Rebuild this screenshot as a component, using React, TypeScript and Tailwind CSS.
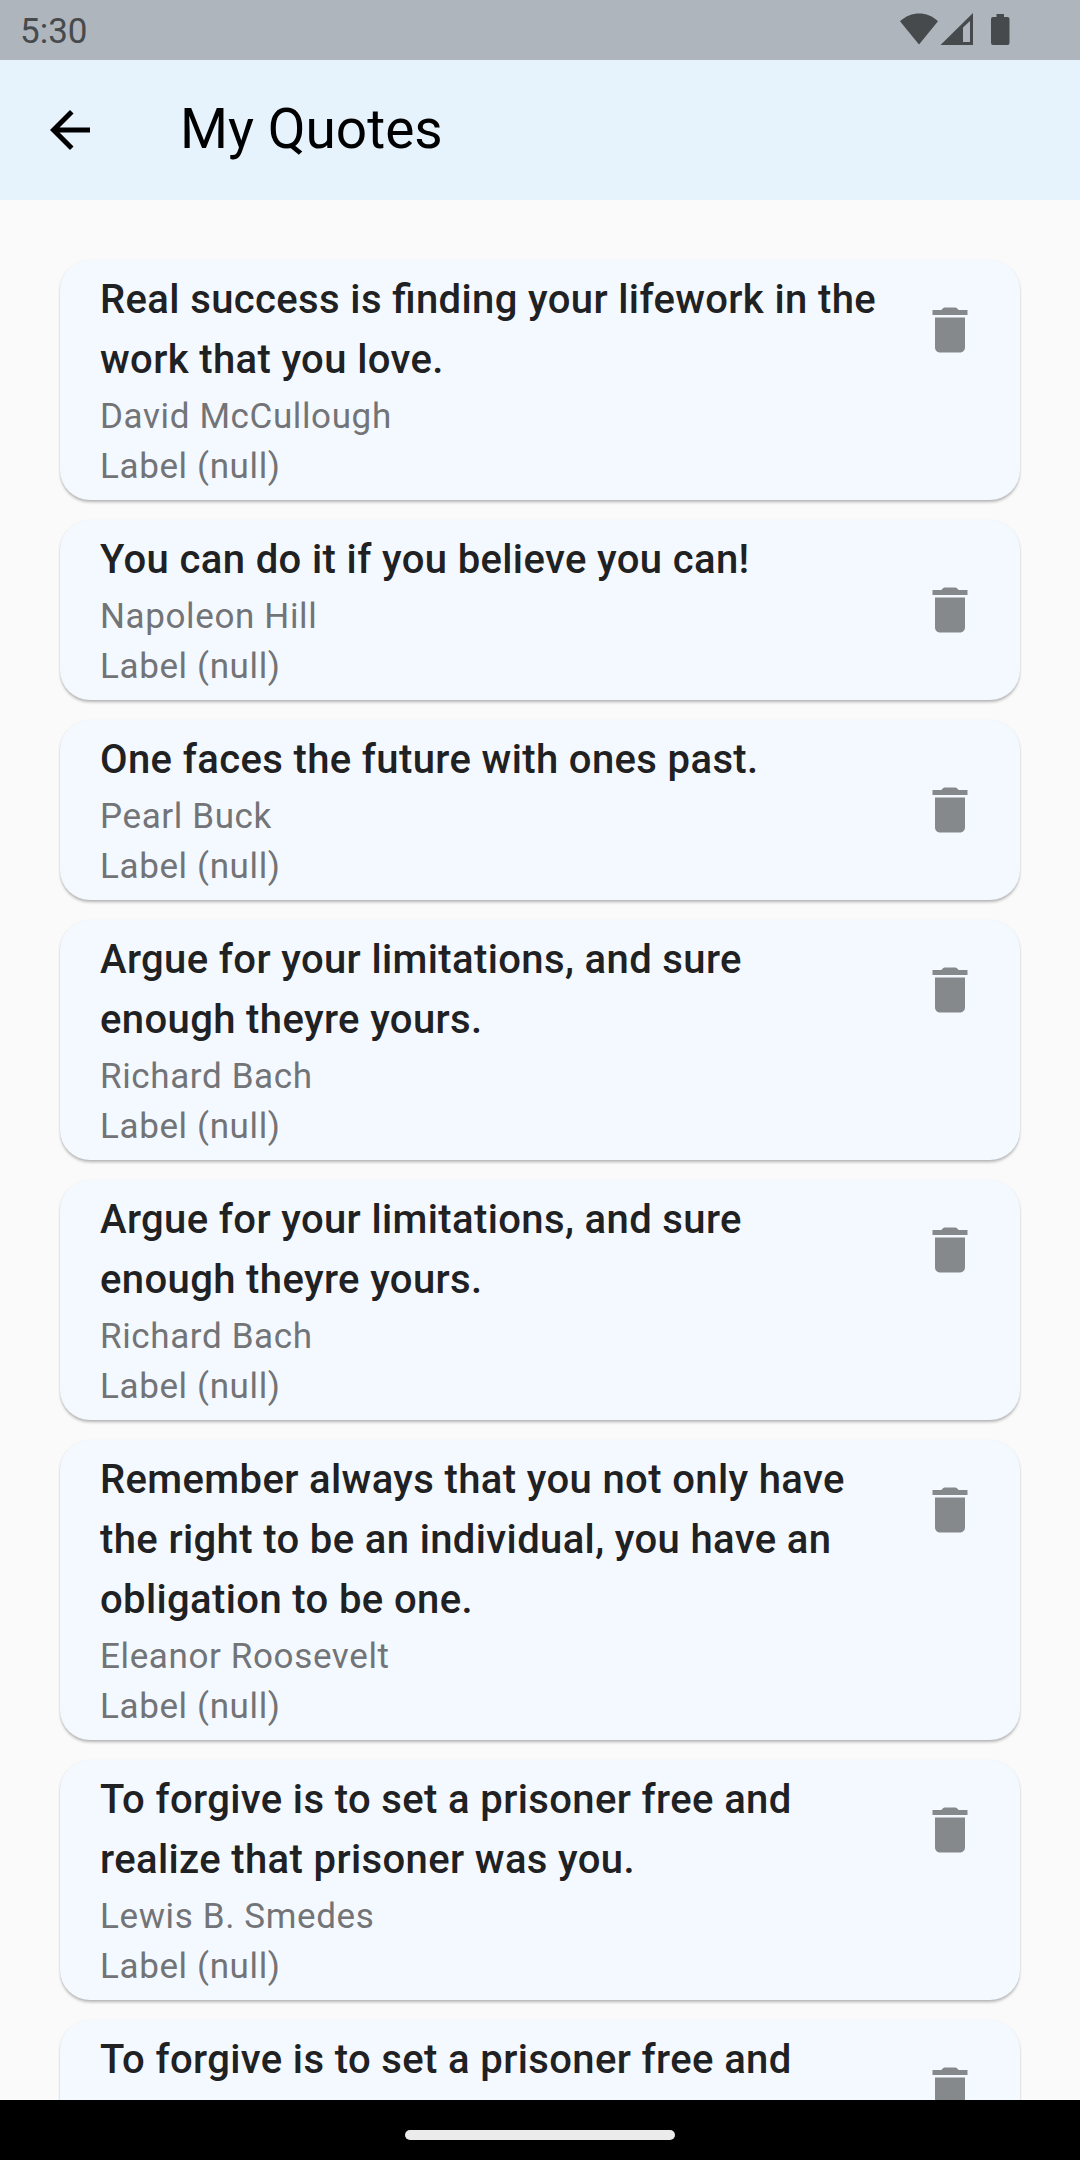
const quotes = [
  { lines: ['Real success is finding your lifework in the', 'work that you love.'], author: 'David McCullough' },
  { lines: ['You can do it if you believe you can!'], author: 'Napoleon Hill' },
  { lines: ['One faces the future with ones past.'], author: 'Pearl Buck' },
  { lines: ['Argue for your limitations, and sure', 'enough theyre yours.'], author: 'Richard Bach' },
  { lines: ['Argue for your limitations, and sure', 'enough theyre yours.'], author: 'Richard Bach' },
  { lines: ['Remember always that you not only have', 'the right to be an individual, you have an', 'obligation to be one.'], author: 'Eleanor Roosevelt' },
  { lines: ['To forgive is to set a prisoner free and', 'realize that prisoner was you.'], author: 'Lewis B. Smedes' },
  { lines: ['To forgive is to set a prisoner free and', 'realize that prisoner was you.'], author: 'Lewis B. Smedes' },
];

function StatusBar() {
  return (
    <div className="flex h-[60px] shrink-0 items-center justify-between bg-[#aeb5bd] pl-5 pr-[68px] text-[#474a4c]">
      <span className="pt-1 text-[35px] leading-[56px]">5:30</span>
      <svg className="h-[60px] w-[120px]" viewBox="0 0 120 60" fill="currentColor">
        <path d="M8 21.3C19 10.8 35.500 10.800 46 21.300L27 44.500Z" />
        <path fillRule="evenodd" d="M81 13V45H48.500ZM78 21L71 27.500V42H78Z" />
        <path d="M104.500 14h7.500v3h3.500q2 0 2 2v24q0 2-2 2h-14.500q-2 0-2-2v-24q0-2 2-2h3.500z" />
      </svg>
    </div>
  );
}

function QuoteCard({ lines, author }: { lines: string[]; author: string }) {
  return (
    <article
      className={`flex shrink-0 justify-between rounded-[30px] bg-[#f4f9ff] pb-2 pl-10 pr-10 pt-[10px] shadow-[0_2.5px_2.5px_-2.5px_rgba(0,0,0,0.2),0_2.5px_2.5px_rgba(0,0,0,0.14),0_1px_2.5px_rgba(0,0,0,0.1)] ${
        lines.length > 1 ? 'items-start' : 'items-center'
      }`}
    >
      <div>
        <h2 className="mb-[2px] text-[40px] font-medium leading-[60px] tracking-[0.375px] text-[#1f2122] [font-feature-settings:'liga'_1]">
          {lines.map((line) => (
            <span key={line} className="block whitespace-nowrap">{line}</span>
          ))}
        </h2>
        <p className="text-[35px] leading-[50px] tracking-[0.625px] text-[#727477]">{author}</p>
        <p className="text-[35px] leading-[50px] tracking-[0.625px] text-[#727477]">Label (null)</p>
      </div>
      <button
        aria-label="Delete"
        className={`h-[60px] w-[60px] shrink-0 text-[#85898c] ${lines.length > 1 ? 'mt-[30px]' : 'mb-[2px]'}`}
      >
        <svg className="h-[60px] w-[60px]" viewBox="0 0 24 24" fill="currentColor">
          <path d="M6 19c0 1.100.9 2 2 2h8c1.100 0 2-.9 2-2V7H6v12zM18 4h-2.500l-.71-.71c-.18-.18-.44-.29-.7-.29H9.910c-.26 0-.52.11-.7.29L8.500 4H5v2h14V4z" />
        </svg>
      </button>
    </article>
  );
}

export default function App() {
  return (
    <div className="flex h-[2160px] w-[1080px] flex-col overflow-hidden bg-[#fafafa] font-[Roboto,sans-serif]">
      <StatusBar />
      <header className="flex h-[140px] shrink-0 items-center bg-[#e6f3fd] pl-10 text-black">
        <button aria-label="Back" className="mr-20 h-[60px] w-[60px]">
          <svg className="h-[60px] w-[60px]" viewBox="0 0 24 24" fill="currentColor">
            <path d="M20 11H7.830l5.590-5.590L12 4l-8 8 8 8 1.410-1.410L7.830 13H20v-2z" />
          </svg>
        </button>
        <h1 className="pb-[2px] text-[55px] leading-[70px]">My Quotes</h1>
      </header>
      <main className="flex min-h-0 flex-1 flex-col gap-5 overflow-hidden px-[60px] pt-[60px]">
        {quotes.map((quote, i) => (
          <QuoteCard key={i} {...quote} />
        ))}
      </main>
      <nav className="flex h-[60px] shrink-0 justify-center bg-black pt-[30px]">
        <div className="h-[10px] w-[270px] rounded-full bg-[#ebebeb]" />
      </nav>
    </div>
  );
}
